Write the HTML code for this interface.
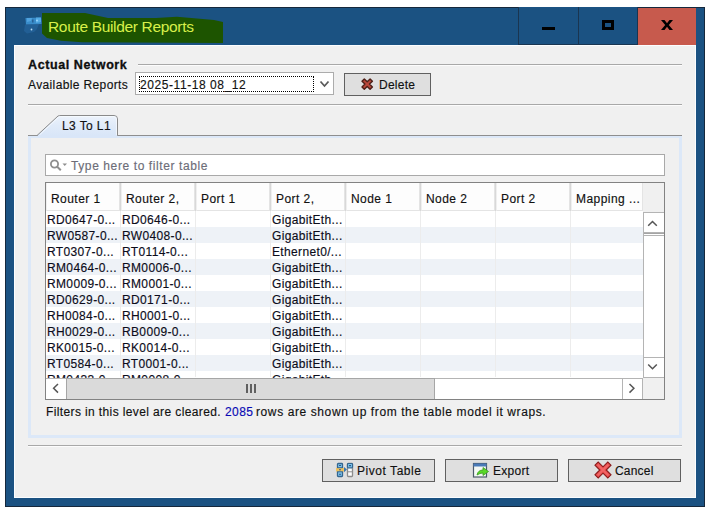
<!DOCTYPE html>
<html><head><meta charset="utf-8">
<style>
*{margin:0;padding:0;box-sizing:border-box}
html,body{width:709px;height:513px;overflow:hidden;background:#fff;font-family:"Liberation Sans",sans-serif;font-size:12px;color:#111}
.a{position:absolute}
.t{position:absolute;white-space:nowrap;line-height:14px;letter-spacing:0.25px;-webkit-text-stroke:0.15px currentColor}
#win{left:5px;top:7px;width:700px;height:500px;background:#1b5282;border:1px solid #16283c}
#content{left:14px;top:45px;width:682px;height:453px;background:#f0f0f0;border:1px solid #fbfdff}
.hl{background:#d9d9d9}
.btn{position:absolute;background:#dfdfdf;border:1px solid #606060}
.row{position:absolute;left:46px;width:597px;height:16px}
.row.s{background:#eef2f7}
.cell{position:absolute;top:2px;white-space:nowrap;line-height:14px;letter-spacing:0.35px;-webkit-text-stroke:0.15px currentColor;color:#0c0c1a}
.hdr{position:absolute;top:183px;height:28px;background:#fdfdfd;border-left:1px solid #efefef;border-right:1px solid #e4e4e4;border-bottom:1px solid #e4e4e4}
.hsep{position:absolute;top:183px;width:1px;height:28px;background:#d8d8d8}
.vg{position:absolute;top:211px;width:1px;height:166px;background:#ececec}
</style></head><body>
<div id="win" class="a"></div>
<!-- title highlight -->
<svg class="a" style="left:0;top:0" width="709" height="50">
  <path d="M42 13 L85 13 L108 18 L156 18 L177 16.7 L214 20 L223 22 L223 43 L82 42.3 L61 40.7 L47 38 L42 33.6 Z" fill="#1d5400"/>
</svg>
<!-- app icon -->
<svg class="a" style="left:23px;top:16px" width="20" height="19">
  <path d="M2.5 2 L18 1.5 L18.5 8 L3 8.5 Z" fill="#3d92d2" opacity="0.9"/>
  <path d="M4 2 L9 2 L8 5 L4 6 Z" fill="#56a8e2" opacity="0.8"/>
  <path d="M13 1.5 L18 1.5 L18 6 L13 7 Z" fill="#5ab0e8" opacity="0.8"/>
  <path d="M2 8.5 L16 8 L14 13 L11 16 L4 17.5 L1 15 Z" fill="#2d6fae" opacity="0.45"/>
  <rect x="9" y="3.5" width="1.5" height="3" fill="#1f4f80" opacity="0.7"/>
  <circle cx="14" cy="4.5" r="0.9" fill="#9fd8ff"/>
  <circle cx="8.5" cy="13.5" r="0.9" fill="#b8dcf4"/>
</svg>
<div class="t" style="left:48px;top:19px;font-size:15.5px;line-height:16px;letter-spacing:-0.33px;color:#d8f04a;-webkit-text-stroke:0">Route Builder Reports</div>
<!-- title buttons -->
<div class="a" style="left:518px;top:7px;width:61px;height:38px;border:1px solid #1a3550;border-top:none;background:#1b5282"></div>
<div class="a" style="left:579px;top:7px;width:59px;height:38px;border:1px solid #1a3550;border-top:none;border-left:none;background:#1b5282"></div>
<div class="a" style="left:638px;top:8px;width:58px;height:37px;background:#c75a4d"></div>
<div class="a" style="left:542px;top:27px;width:13px;height:3px;background:#000"></div>
<div class="a" style="left:602px;top:20px;width:12px;height:10px;border:3px solid #000"></div>
<svg class="a" style="left:661px;top:20px" width="12" height="10"><path d="M0 0 H3.5 L6 3.2 L8.5 0 H12 L7.8 5 L12 10 H8.5 L6 6.8 L3.5 10 H0 L4.2 5 Z" fill="#000"/></svg>

<div id="content" class="a"></div>

<div class="t" style="left:28px;top:58px;font-weight:bold;font-size:12.5px;letter-spacing:0.6px;-webkit-text-stroke:0.3px #000">Actual Network</div>
<div class="a hl" style="left:138px;top:64px;width:544px;height:1px;background:#a8a8a8"></div>
<div class="a" style="left:138px;top:65px;width:544px;height:1px;background:#fcfcfc"></div>
<div class="t" style="left:28px;top:78px;letter-spacing:0.37px">Available Reports</div>
<!-- combo -->
<div class="a" style="left:135px;top:72px;width:199px;height:23px;background:#fff;border:1px solid #acacac"></div>
<div class="a" style="left:139px;top:76px;width:175px;height:16px;border:1px dotted #000"></div>
<div class="t" style="left:140px;top:78px;letter-spacing:0.57px">2025-11-18 08_12</div>
<svg class="a" style="left:319px;top:80px" width="12" height="9"><path d="M1.5 1.5 L5.5 6 L9.5 1.5" fill="none" stroke="#5a5a5a" stroke-width="1.8"/></svg>
<!-- delete -->
<div class="btn" style="left:344px;top:73px;width:87px;height:23px"></div>
<svg class="a" style="left:360px;top:77px" width="14" height="14">
  <path d="M2.00 4.20 L4.30 1.90 L7.20 4.80 L10.10 1.90 L12.40 4.20 L9.50 7.10 L12.40 10.00 L10.10 12.30 L7.20 9.40 L4.30 12.30 L2.00 10.00 L4.90 7.10 Z" fill="#b9473a" stroke="#4e2018" stroke-width="1.4" stroke-linejoin="round"/>
</svg>
<div class="t" style="left:379px;top:78px;letter-spacing:0.25px">Delete</div>
<div class="a" style="left:28px;top:104px;width:654px;height:1px;background:#a8a8a8"></div>
<div class="a" style="left:28px;top:105px;width:654px;height:1px;background:#fcfcfc"></div>

<!-- tab panel -->
<div class="a" style="left:28px;top:135px;width:654px;height:303px;background:#dce8f8;border-top:1px solid #8e8e8e"></div>
<div class="a" style="left:31px;top:138px;width:648px;height:297px;background:#f0f0f0"></div>
<svg class="a" style="left:28px;top:110px" width="100" height="30">
  <defs><linearGradient id="tg" x1="0" y1="0" x2="0" y2="1"><stop offset="0" stop-color="#edf3fc"/><stop offset="0.5" stop-color="#e0ebf9"/><stop offset="1" stop-color="#d9e6f8"/></linearGradient></defs>
  <path d="M9 25.5 L30 6 Q31 5.5 33 5.5 L86 5.5 Q89.5 5.5 89.5 9 L89.5 25.5" fill="url(#tg)" stroke="#8a8a8a" stroke-width="1"/>
  <path d="M11.5 25 L30.5 7.2 Q31.5 6.6 33 6.6 L86 6.6 Q88.4 6.6 88.4 9 L88.4 25" fill="none" stroke="#f8fbff" stroke-width="1" opacity="0.8"/>
  <rect x="10" y="25" width="79" height="3" fill="#d9e6f8"/>
</svg>
<div class="t" style="left:62px;top:119px;letter-spacing:0.4px">L3 To L1</div>

<!-- filter -->
<div class="a" style="left:45px;top:154px;width:620px;height:22px;background:#fff;border:1px solid #a9a9a9"></div>
<svg class="a" style="left:48px;top:157px" width="22" height="16">
  <circle cx="6.5" cy="7" r="3.6" fill="none" stroke="#8e8e8e" stroke-width="1.8"/>
  <path d="M9 9.6 L12.8 13.2" stroke="#8e8e8e" stroke-width="2"/>
  <path d="M14.5 6.5 H19 L16.75 9 Z" fill="#8e8e8e"/>
</svg>
<div class="t" style="left:71px;top:159px;letter-spacing:0.6px;color:#6d6d78">Type here to filter table</div>

<!-- table -->
<div class="a" style="left:45px;top:182px;width:620px;height:218px;background:#fff;border:1px solid #828282"></div>
<div class="a" style="left:643px;top:183px;width:21px;height:29px;background:#f0f0f0"></div>
<div id="hdrs"></div>
<div class="hdr" style="left:46px;width:74px"></div>
<div class="hsep" style="left:120px"></div>
<div class="t" style="left:51px;top:192px;letter-spacing:0.45px">Router 1</div>
<div class="hdr" style="left:121px;width:74px"></div>
<div class="hsep" style="left:195px"></div>
<div class="t" style="left:126px;top:192px;letter-spacing:0.45px">Router 2,</div>
<div class="hdr" style="left:196px;width:74px"></div>
<div class="hsep" style="left:270px"></div>
<div class="t" style="left:201px;top:192px;letter-spacing:0.45px">Port 1</div>
<div class="hdr" style="left:271px;width:74px"></div>
<div class="hsep" style="left:345px"></div>
<div class="t" style="left:276px;top:192px;letter-spacing:0.45px">Port 2,</div>
<div class="hdr" style="left:346px;width:74px"></div>
<div class="hsep" style="left:420px"></div>
<div class="t" style="left:351px;top:192px;letter-spacing:0.45px">Node 1</div>
<div class="hdr" style="left:421px;width:74px"></div>
<div class="hsep" style="left:495px"></div>
<div class="t" style="left:426px;top:192px;letter-spacing:0.45px">Node 2</div>
<div class="hdr" style="left:496px;width:74px"></div>
<div class="hsep" style="left:570px"></div>
<div class="t" style="left:501px;top:192px;letter-spacing:0.45px">Port 2</div>
<div class="hdr" style="left:571px;width:72px"></div>
<div class="t" style="left:576px;top:192px;letter-spacing:0.45px">Mapping ...</div>
<div class="a" style="left:46px;top:211px;width:597px;height:167px;overflow:hidden">
<div class="row" style="left:0;top:0px"><div class="cell" style="left:1px">RD0647-0...</div><div class="cell" style="left:76px">RD0646-0...</div><div class="cell" style="left:226px">GigabitEth...</div></div>
<div class="row s" style="left:0;top:16px"><div class="cell" style="left:1px">RW0587-0...</div><div class="cell" style="left:76px">RW0408-0...</div><div class="cell" style="left:226px">GigabitEth...</div></div>
<div class="row" style="left:0;top:32px"><div class="cell" style="left:1px">RT0307-0...</div><div class="cell" style="left:76px">RT0114-0...</div><div class="cell" style="left:226px">Ethernet0/...</div></div>
<div class="row s" style="left:0;top:48px"><div class="cell" style="left:1px">RM0464-0...</div><div class="cell" style="left:76px">RM0006-0...</div><div class="cell" style="left:226px">GigabitEth...</div></div>
<div class="row" style="left:0;top:64px"><div class="cell" style="left:1px">RM0009-0...</div><div class="cell" style="left:76px">RM0001-0...</div><div class="cell" style="left:226px">GigabitEth...</div></div>
<div class="row s" style="left:0;top:80px"><div class="cell" style="left:1px">RD0629-0...</div><div class="cell" style="left:76px">RD0171-0...</div><div class="cell" style="left:226px">GigabitEth...</div></div>
<div class="row" style="left:0;top:96px"><div class="cell" style="left:1px">RH0084-0...</div><div class="cell" style="left:76px">RH0001-0...</div><div class="cell" style="left:226px">GigabitEth...</div></div>
<div class="row s" style="left:0;top:112px"><div class="cell" style="left:1px">RH0029-0...</div><div class="cell" style="left:76px">RB0009-0...</div><div class="cell" style="left:226px">GigabitEth...</div></div>
<div class="row" style="left:0;top:128px"><div class="cell" style="left:1px">RK0015-0...</div><div class="cell" style="left:76px">RK0014-0...</div><div class="cell" style="left:226px">GigabitEth...</div></div>
<div class="row s" style="left:0;top:144px"><div class="cell" style="left:1px">RT0584-0...</div><div class="cell" style="left:76px">RT0001-0...</div><div class="cell" style="left:226px">GigabitEth...</div></div>
<div class="row" style="left:0;top:160px"><div class="cell" style="left:1px">RM0433-0...</div><div class="cell" style="left:76px">RM0008-0...</div><div class="cell" style="left:226px">GigabitEth...</div></div>
<div class="vg" style="left:74px;top:0"></div>
<div class="vg" style="left:149px;top:0"></div>
<div class="vg" style="left:224px;top:0"></div>
<div class="vg" style="left:299px;top:0"></div>
<div class="vg" style="left:374px;top:0"></div>
<div class="vg" style="left:449px;top:0"></div>
<div class="vg" style="left:524px;top:0"></div>
</div>
<!--/table-->
<div id="rows"></div>

<!-- vertical scrollbar -->
<div class="a" style="left:643px;top:212px;width:21px;height:166px;background:#fff;border-left:1px solid #b4b4b4"></div>
<div class="a" style="left:643px;top:212px;width:21px;height:21px;background:#fff;border:1px solid #b4b4b4;border-right:none"></div>
<div class="a" style="left:644px;top:233px;width:20px;height:1px;background:#a4a4a4"></div>
<div class="a" style="left:644px;top:235px;width:20px;height:1px;background:#b4b4b4"></div>
<div class="a" style="left:643px;top:357px;width:21px;height:21px;background:#fff;border:1px solid #b4b4b4;border-right:none"></div>
<svg class="a" style="left:647px;top:218px" width="12" height="10"><path d="M1.2 7.8 L5.5 3.5 L9.8 7.8" fill="none" stroke="#555" stroke-width="1.5"/></svg>
<svg class="a" style="left:647px;top:361px" width="12" height="10"><path d="M1.2 3.5 L5.5 7.8 L9.8 3.5" fill="none" stroke="#555" stroke-width="1.5"/></svg>
<!-- horizontal scrollbar -->
<div class="a" style="left:46px;top:378px;width:597px;height:21px;background:#fff;border-top:1px solid #b4b4b4"></div>
<div class="a" style="left:66px;top:378px;width:369px;height:21px;background:#dadada;border:1px solid #a6a6a6;border-bottom:none"></div>
<div class="a" style="left:246px;top:384px;width:2px;height:9px;background:#606060"></div>
<div class="a" style="left:250px;top:384px;width:2px;height:9px;background:#606060"></div>
<div class="a" style="left:254px;top:384px;width:2px;height:9px;background:#606060"></div>
<div class="a" style="left:622px;top:378px;width:21px;height:21px;background:#fff;border:1px solid #b4b4b4;border-bottom:none"></div>
<div class="a" style="left:643px;top:378px;width:21px;height:21px;background:#f0f0f0"></div>
<svg class="a" style="left:51px;top:383px" width="10" height="12"><path d="M7 1 L2.6 5.3 L7 9.6" fill="none" stroke="#555" stroke-width="1.5"/></svg>
<svg class="a" style="left:627px;top:383px" width="10" height="12"><path d="M2.5 1 L6.9 5.3 L2.5 9.6" fill="none" stroke="#555" stroke-width="1.5"/></svg>
<!-- status -->
<div class="t" style="left:46px;top:405px;letter-spacing:0.38px">Filters in this level are cleared.</div>
<div class="t" style="left:225px;top:405px;letter-spacing:0.45px;color:#0a0ab4">2085</div>
<div class="t" style="left:256px;top:405px;letter-spacing:0.6px">rows are shown up from the table model it wraps.</div>
<!-- bottom separator -->
<div class="a" style="left:28px;top:445px;width:654px;height:1px;background:#a8a8a8"></div>
<div class="a" style="left:28px;top:446px;width:654px;height:1px;background:#fcfcfc"></div>
<!-- bottom buttons -->
<div class="btn" style="left:322px;top:459px;width:113px;height:23px"></div>
<svg class="a" style="left:335px;top:462px" width="20" height="16">
  <rect x="2.5" y="1.5" width="5" height="13" rx="0.8" fill="#80c6ee" stroke="#35668f" stroke-width="1.3"/>
  <rect x="1" y="6" width="8" height="3.5" fill="#f2c25a" opacity="0.95"/>
  <path d="M2.5 5.7 H7.5 M2.5 9.8 H7.5" stroke="#35668f" stroke-width="1"/>
  <path d="M4 3.5 H6 M4 7.7 H6 M4 12.2 H6" stroke="#2a5a88" stroke-width="1.1"/>
  <path d="M9 5 L12 7.6 L9 10.3 Z" fill="#3a78b0"/>
  <rect x="12.5" y="1.5" width="5" height="13" rx="0.8" fill="#fdfdfd" stroke="#8c8c8c" stroke-width="1.3"/>
  <rect x="12.5" y="1.5" width="5" height="4.3" rx="0.8" fill="#80c6ee" stroke="#35668f" stroke-width="1.2"/>
  <path d="M12.5 9.8 H17.5" stroke="#8c8c8c" stroke-width="1"/>
  <path d="M14 3.6 H16" stroke="#2a5a88" stroke-width="1.1"/>
</svg>
<div class="t" style="left:357px;top:464px;letter-spacing:0.55px">Pivot Table</div>
<div class="btn" style="left:445px;top:459px;width:113px;height:23px"></div>
<svg class="a" style="left:472px;top:462px" width="20" height="17">
  <rect x="1.5" y="1.5" width="13" height="13.5" fill="#f4f8f4" stroke="#4b5a6a" stroke-width="1.2"/>
  <rect x="1.5" y="1.5" width="13" height="3" fill="#4a7ab8"/>
  <path d="M5 13 Q6 8 11 8 L11 5.5 L16.5 9.5 L11 13.5 L11 11 Q8 11 5 13 Z" fill="#5ad828" stroke="#3a9a20" stroke-width="0.8"/>
</svg>
<div class="t" style="left:493px;top:464px;letter-spacing:0.3px">Export</div>
<div class="btn" style="left:568px;top:459px;width:113px;height:23px"></div>
<svg class="a" style="left:594px;top:461px" width="18" height="18">
  <path d="M1.00 4.20 L4.20 1.00 L9.00 5.80 L13.80 1.00 L17.00 4.20 L12.20 9.00 L17.00 13.80 L13.80 17.00 L9.00 12.20 L4.20 17.00 L1.00 13.80 L5.80 9.00 Z" fill="#ee5252" stroke="#8a1c1c" stroke-width="1.1" stroke-linejoin="miter"/>
  <path d="M3.20 4.40 L4.40 3.20 L9.00 7.80 L13.60 3.20 L14.80 4.40 L10.20 9.00 L14.80 13.60 L13.60 14.80 L9.00 10.20 L4.40 14.80 L3.20 13.60 L7.80 9.00 Z" fill="#f57a7a" opacity="0.5"/>
</svg>
<div class="t" style="left:615px;top:464px;letter-spacing:0.2px">Cancel</div>
</body></html>
